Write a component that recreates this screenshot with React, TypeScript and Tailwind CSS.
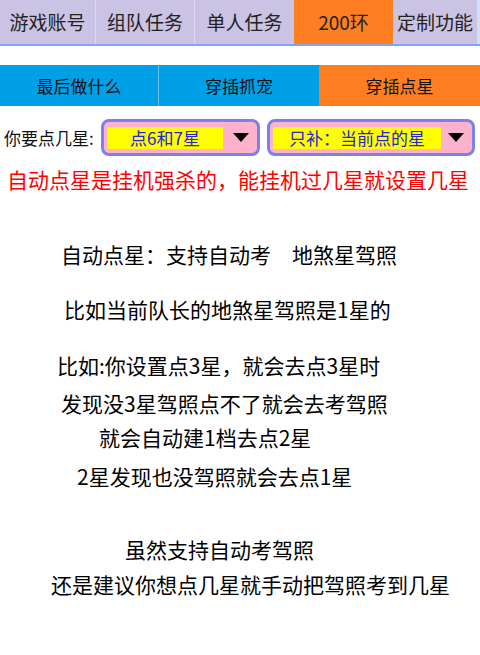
const font = { fontFamily: '"Noto Sans CJK SC", "Noto Sans", sans-serif' }

function Caret() {
  return (
    <svg width="16" height="9" viewBox="0 0 16 9" className="shrink-0">
      <polygon points="0,0 16,0 8,9" fill="#000" />
    </svg>
  )
}

function Picker({ label, boxW, outerW }: { label: string; boxW: string; outerW: string }) {
  return (
    <div className={`${outerW} h-[37px] rounded-lg border-[3px] border-[#7c80e8] bg-[#ffb2cb] flex items-center pl-[3px] pr-[8px]`}>
      <div className={`${boxW} h-[22px] bg-[#ffff00] flex items-center justify-center text-[17px] leading-none text-[#2424d8]`}>
        {label}
      </div>
      <div className="flex-1 flex justify-end">
        <Caret />
      </div>
    </div>
  )
}

export default function App() {
  return (
    <div style={font} className="w-[480px] h-[655px] bg-white overflow-hidden text-black">
      {/* top tabs */}
      <div className="flex h-[46px] border-b-2 border-[#7ea4f4] bg-[#dcd6ee]">
        <div className="w-[96px] bg-[#cbc3e4] border-r border-[#ded9ef] flex items-center justify-center text-[19px] text-[#222]">游戏账号</div>
        <div className="w-[99px] bg-[#cbc3e4] border-r border-[#ded9ef] flex items-center justify-center text-[19px] text-[#222]">组队任务</div>
        <div className="w-[99px] bg-[#cbc3e4] flex items-center justify-center text-[19px] text-[#222]">单人任务</div>
        <div className="w-[99px] bg-[#fd7f22] flex items-center justify-center text-[19px] text-[#222]">200环</div>
        <div className="w-[84px] bg-[#cbc3e4] flex items-center justify-center text-[19px] text-[#222]">定制功能</div>
        <div className="flex-1 bg-[#cfe0fb]" />
      </div>

      {/* sub tabs */}
      <div className="mt-[19px] flex h-[41px]">
        <div className="w-[159px] bg-[#00a0e6] border-r border-[#6cc2f2] flex items-center justify-center text-[17px] text-[#111]">最后做什么</div>
        <div className="w-[160px] bg-[#00a0e6] flex items-center justify-center text-[17px] text-[#111]">穿插抓宠</div>
        <div className="flex-1 bg-[#fd7f22] flex items-center justify-center text-[17px] text-[#111]">穿插点星</div>
      </div>

      {/* picker row */}
      <div className="mt-[13px] flex items-center">
        <div className="w-[101px] pl-[4px] text-[17px] text-[#111] leading-none">你要点几星:</div>
        <Picker label="点6和7星" boxW="w-[116px]" outerW="w-[159px]" />
        <div className="w-[7px]" />
        <Picker label="只补：当前点的星" boxW="w-[168px]" outerW="w-[208px]" />
      </div>

      <div className="mt-[8px] h-[30px] leading-[30px] text-[21px] text-[#ff0000] pl-[7px] whitespace-nowrap">
        自动点星是挂机强杀的，能挂机过几星就设置几星
      </div>

      {/* notes */}
      <div className="text-[21px] leading-[30px] whitespace-nowrap">
        <div className="mt-[45px] pl-[61px]">自动点星：支持自动考　地煞星驾照</div>
        <div className="mt-[25px] pl-[64px]">比如当前队长的地煞星驾照是1星的</div>
        <div className="mt-[26px] pl-[57px]">比如:你设置点3星，就会去点3星时</div>
        <div className="mt-[8px] pl-[61px]">发现没3星驾照点不了就会去考驾照</div>
        <div className="mt-[4px] pl-[99px]">就会自动建1档去点2星</div>
        <div className="mt-[9px] pl-[77px]">2星发现也没驾照就会去点1星</div>
        <div className="mt-[43px] pl-[125px]">虽然支持自动考驾照</div>
        <div className="mt-[5px] pl-[51px]">还是建议你想点几星就手动把驾照考到几星</div>
      </div>
    </div>
  )
}
